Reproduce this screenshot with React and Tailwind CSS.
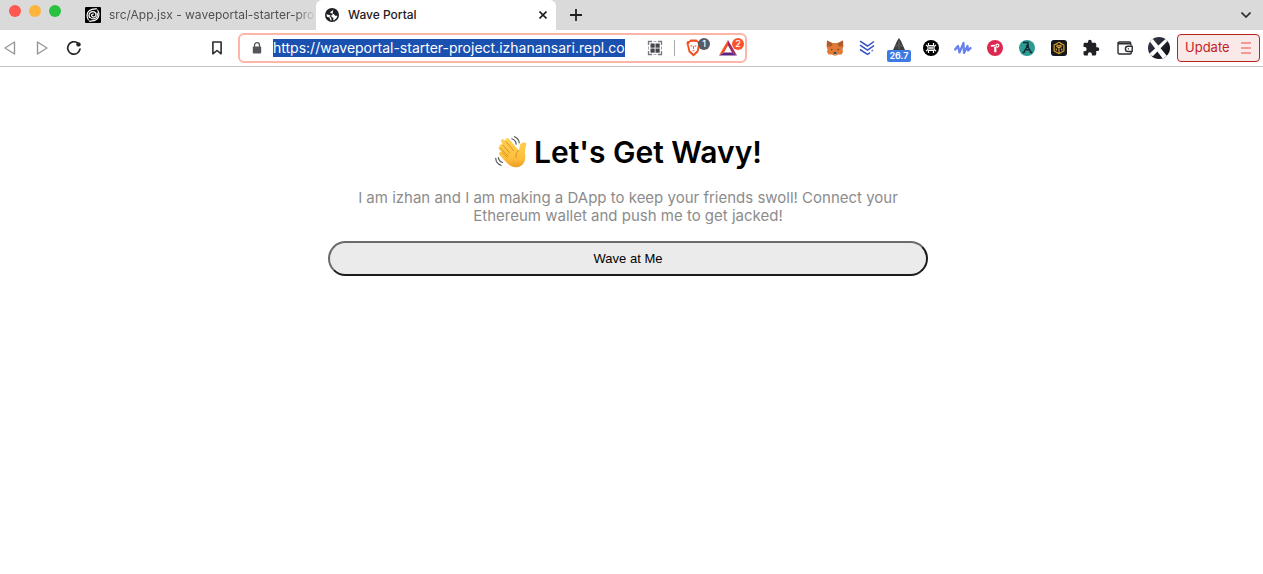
import React from "react";

function SwirlIcon() {
  return (
    <svg width="16" height="16" viewBox="0 0 16 16" fill="none" stroke="#fff" strokeLinecap="round" aria-hidden="true">
      <rect width="16" height="16" rx="1" fill="#000" stroke="none" />
      <path d="M3.300 12.800C1.200 9.500 1.800 5.500 4.500 3.500C7 1.800 9.500 2 11.500 1.800" strokeWidth="1.200" />
      <path d="M12.700 3.200C14.800 6.500 14.200 10.500 11.500 12.500C9 14.200 6.500 14 4.500 14.200" strokeWidth="1.200" />
      <path d="M4.500 10.500C3.400 8.200 4.200 5.600 6.400 4.800C8.800 4 11.300 5.500 11 8C10.700 10 8 10.800 6.900 9.200C6.200 8 7 6.900 8.200 7.200" strokeWidth="1.300" />
      <path d="M12.200 6C13 8.800 11.700 11.300 9.200 11.800C7.600 12.100 6.200 11.600 5.300 10.500" strokeWidth="1.100" />
    </svg>
  );
}

function GlobeIcon() {
  return (
    <svg width="14" height="14" viewBox="0 0 14 14" aria-hidden="true">
      <circle cx="7" cy="7" r="7" fill="#1f2023" />
      <path d="M8.200 1.600C7.800 3 6.800 3.100 5.900 3.500C5 4 5.200 4.900 6 5.300L8.700 5.900C9.700 6.300 9.400 7.500 10.500 7.700H12.400C12 10 10.400 12 8 12.400C8.300 11.300 8.800 10.500 8.200 9.800C7.700 9.100 6.500 9.200 6.300 8.200L5.200 7.300L1.600 6.200C1.500 7.200 1.700 8 2 8.700L4.300 9.500C5.200 10 4.700 11.200 5.800 12.500L6.500 12.600V11.300C6.500 10.300 5.700 9 4.500 8.300L5.200 7.300L7 7.400L7.500 6.600Z" fill="#fff" />
    </svg>
  );
}

function ReloadIcon() {
  return (
    <svg width="16" height="16" viewBox="0 0 16 16" fill="none" aria-hidden="true">
      <path d="M14 9.200A6.200 6.200 0 1 1 11.600 3" stroke="#242529" strokeWidth="1.700" strokeLinecap="round" />
      <circle cx="12.500" cy="4.400" r="2.200" fill="#242529" />
    </svg>
  );
}

function GridIcon() {
  return (
    <svg width="16" height="16" viewBox="0 0 16 16" aria-hidden="true">
      <path d="M1.500 5V1.500H5M11 1.500H14.500V5M14.500 11V14.500H11M5 14.500H1.500V11" fill="none" stroke="#77787e" strokeWidth="1.300" />
      <path d="M6.500 1.500H9.500M6.500 14.500H9.500M1.500 6.500V9.500M14.500 6.500V9.500" fill="none" stroke="#a5a6aa" strokeWidth="1" />
      <g fill="#45464c">
        <rect x="3.500" y="3.500" width="4.200" height="4.200" />
        <rect x="8.500" y="3.500" width="4.200" height="4.200" />
        <rect x="3.500" y="8.500" width="4.200" height="4.200" />
        <rect x="8.500" y="8.500" width="4.200" height="4.200" />
      </g>
    </svg>
  );
}

function BraveIcon() {
  return (
    <svg width="15" height="18" viewBox="0 0 15 18" aria-hidden="true">
      <path d="M4.500 0.500H10.500L12 2L13.800 2.200L14.600 4.200L14 6L12.400 13L7.500 17.500L2.600 13L1 6L0.400 4.200L1.200 2.200L3 2Z" fill="#f4511f" />
      <path d="M4 3L7.500 2.800L11 3L12.400 5.500L11.300 9L11 11.500L7.500 14.800L4 11.500L3.700 9L2.600 5.500Z" fill="#fff" />
      <path d="M4.400 6.200L6.400 6.600L6.200 7.700L4.800 7.200ZM10.600 6.200L8.600 6.600L8.800 7.700L10.200 7.200ZM7.100 7H7.900L8.100 9.500L7.500 10.100L6.900 9.500ZM5.800 11L7.500 11.600L9.200 11L7.500 12.400Z" fill="#f4511f" />
    </svg>
  );
}

function BatIcon() {
  return (
    <svg width="18" height="16" viewBox="0 0 18 16" aria-hidden="true">
      <path d="M9 0L0 15.500L5 12.500L9 5.500Z" fill="#f4511f" />
      <path d="M9 0L18 15.500L13 12.500L9 5.500Z" fill="#9e2a62" />
      <path d="M0 15.500H18L13 12.500H5Z" fill="#5e2482" />
    </svg>
  );
}

function FoxIcon() {
  return (
    <svg width="18" height="16" viewBox="0 0 18 16" aria-hidden="true">
      <path d="M1 0.500L6.500 3H11.500L17 0.500L17.500 6L16.500 9.500L17 12L15.500 14.500L12 14.500L10.500 15.500H7.500L6 14.500L2.500 14.500L1 12L1.500 9.500L0.500 6Z" fill="#e07a35" />
      <path d="M1 0.500L6.500 3.500L5.500 6.500L1.200 6.500ZM17 0.500L11.500 3.500L12.500 6.500L16.800 6.500Z" fill="#a85a30" />
      <path d="M4.800 8.800L7 9.800L5.500 10.300ZM13.200 8.800L11 9.800L12.500 10.300Z" fill="#33312f" />
      <path d="M6.800 12.800L7.500 14.800H10.500L11.200 12.800L10.500 12H7.500Z" fill="#bfa593" />
      <path d="M7.500 12.200H10.500L10.300 13.700H7.700Z" fill="#25272a" />
    </svg>
  );
}

function ChevronsIcon() {
  return (
    <svg width="16" height="16" viewBox="0 0 16 16" fill="none" stroke="#3451c7" strokeWidth="1.500" aria-hidden="true">
      <path d="M1 1.200L8.500 6L15 1.500M1 5.200L8.500 10.200L15 5.700M1 9.500L8.500 14.300L11 12.600" />
      <path d="M12.600 11L14 10.200" stroke="#5e78df" />
    </svg>
  );
}

function ArrowheadIcon() {
  return (
    <svg className="mb-2" width="12" height="12" viewBox="0 0 12 12" aria-hidden="true">
      <path d="M6 0L8 3L12 12H0L4 3Z" fill="#3b3d3e" />
      <path d="M6 3V11M2.500 9L5 6.500M9.500 9L7 6.500" stroke="#7d8081" strokeWidth="0.700" />
    </svg>
  );
}

function HexNodeIcon() {
  return (
    <svg width="16" height="16" viewBox="0 0 16 16" aria-hidden="true">
      <circle cx="8" cy="8" r="8" fill="#000" />
      <path d="M5.500 3V5.500H10.500V3M5.500 13V10.500H10.500V13M3 5L5 6.500V9.500L3 11M13 5L11 6.500V9.500L13 11M6 7.200H10M6 8.900H10" fill="none" stroke="#fff" strokeWidth="1.200" />
    </svg>
  );
}

function WaveformIcon() {
  return (
    <svg width="18" height="14" viewBox="0 0 18 14" fill="none" stroke="#6680f2" strokeWidth="2.200" strokeLinecap="round" strokeLinejoin="round" aria-hidden="true">
      <path d="M1.200 8.500L4 5L5.500 11.500L9.500 2L10 12L13.500 5L14.200 9.500L16.600 7" />
    </svg>
  );
}

function PinkCoinIcon() {
  return (
    <svg width="16" height="16" viewBox="0 0 16 16" aria-hidden="true">
      <circle cx="8" cy="8" r="8" fill="#dd2850" />
      <path d="M4.600 5.800L7.500 5.600" stroke="#fff" strokeWidth="1.800" strokeLinecap="round" />
      <path d="M8.300 7V12.200" stroke="#fff" strokeWidth="2.200" />
      <circle cx="10.400" cy="5.600" r="1.500" fill="none" stroke="#fff" strokeWidth="1.200" />
    </svg>
  );
}

function TealCoinIcon() {
  return (
    <svg width="16" height="16" viewBox="0 0 16 16" aria-hidden="true">
      <circle cx="8" cy="8" r="8" fill="#2c9b94" />
      <path d="M4 2.500H9V6M4.500 13L7.800 7H9L12.300 13M3.500 12.500L6 11.800M13.300 12.500L10.800 11.800M6.200 9.800H10.500" fill="none" stroke="#112a2c" strokeWidth="1.400" />
      <circle cx="8.500" cy="6" r="1.600" fill="#112a2c" />
    </svg>
  );
}

function CubeIcon() {
  return (
    <svg width="16" height="16" viewBox="0 0 16 16" fill="none" stroke="#e6a82d" strokeWidth="1.100" aria-hidden="true">
      <rect width="16" height="16" rx="3" fill="#16181c" stroke="none" />
      <path d="M8 2.300L12.900 5V11L8 13.700L3.100 11V5Z" />
      <path d="M5.300 6.300L8 7.800L10.700 6.300M8 7.800V13M5.500 4.800L8 6L10.500 4.800M5.300 8.500V10.500M10.700 8.500V10.500" />
    </svg>
  );
}

function PuzzleIcon() {
  return (
    <svg width="18" height="18" viewBox="0 0 24 24" fill="#202124" aria-hidden="true">
      <path d="M20.500 11H19V7c0-1.100-.9-2-2-2h-4V3.500a2.500 2.500 0 0 0-5 0V5H4c-1.100 0-2 .9-2 2v3.800h1.500a2.700 2.700 0 0 1 0 5.400H2V20c0 1.100.9 2 2 2h3.800v-1.500a2.700 2.700 0 0 1 5.400 0V22H17c1.100 0 2-.9 2-2v-4h1.500a2.500 2.500 0 0 0 0-5z" />
    </svg>
  );
}

function WalletIcon() {
  return (
    <svg width="16" height="14" viewBox="0 0 16 14" fill="none" stroke="#2b2c30" strokeWidth="1.400" strokeLinejoin="round" aria-hidden="true">
      <path d="M14 4.500V3.500C14 3 13.700 2.700 13 2.700H2.500C0.500 2.700 0.500 1 2.500 1H12.500C13.300 1 13.700 1.500 13.700 2.500M1 2V11.500C1 12.500 1.700 13 2.500 13H13C13.800 13 14.300 12.500 14.300 11.500V10.500" />
      <path d="M15.200 5.300H11A2.600 2.600 0 0 0 11 10.500H15.200Z" />
      <path d="M10.800 7.900H12" />
    </svg>
  );
}

function AvatarIcon() {
  return (
    <svg width="22" height="22" viewBox="0 0 22 22" aria-hidden="true">
      <defs>
        <clipPath id="avatar-clip"><circle cx="11" cy="11" r="11" /></clipPath>
        <linearGradient id="avatar-shade" x1="0" y1="0" x2="1" y2="1">
          <stop offset="0" stopColor="#3d4050" />
          <stop offset="1" stopColor="#07080c" />
        </linearGradient>
      </defs>
      <g clipPath="url(#avatar-clip)">
        <rect width="22" height="22" fill="url(#avatar-shade)" />
        <path d="M0 2L4 1L19 19L15 22Z" fill="#fff" />
        <path d="M18.500 1L20.500 3L5 19L0 18Z" fill="#fff" />
      </g>
    </svg>
  );
}

function WavingHand() {
  return (
    <svg width="34" height="34" viewBox="0 0 34 34" role="img" aria-label="Waving hand">
      <defs>
        <linearGradient id="hand-skin" x1="0" y1="0" x2="0" y2="1">
          <stop offset="0" stopColor="#ffd255" />
          <stop offset="0.700" stopColor="#fdbf3a" />
          <stop offset="1" stopColor="#ec9c25" />
        </linearGradient>
      </defs>
      <path d="M6 12.200C4.600 10.200 7 8.300 8.800 10L7.400 7.300C6 5 8.700 3.200 10.500 5L11.800 6.500C10.300 3.800 13.300 1.800 15.300 4.200L24.500 15.200C25.500 14.500 25.500 12.500 25.800 10.500C26.300 7.300 31.600 6.300 32.400 8.800C32 11.500 31 14 31 17.500C31.200 20.300 32 23 30.500 26.500C28.500 31.500 22 34 17 31C14 29.200 11.500 26.300 6 20.500C3.700 18.200 6 16 8 17.500L5.600 15C4 13 4.700 11.800 6 12.200Z" fill="url(#hand-skin)" />
      <path d="M8.800 10L15.500 17.800M11.800 6.500L19.500 15.500M6.300 13L14 21M8 17.500L13.200 22.300M24.300 15.500C22 17.500 21.300 20.500 22.300 23" fill="none" stroke="#d98b22" strokeWidth="0.900" strokeLinecap="round" />
      <path d="M17.800 3.800C20 4.500 22 6.800 22.200 9.200M20.400 1.700C23 2.700 25 5.400 25.200 7.800M4.300 22.500C4.700 25 6.500 26.800 8.600 27.500M1.700 23.300C2 26.800 4.200 29.500 7 30.300" fill="none" stroke="#55585c" strokeWidth="1.200" strokeLinecap="round" />
    </svg>
  );
}

function IconButton({ label, className, children }) {
  return (
    <button type="button" aria-label={label} className={`flex shrink-0 items-center justify-center ${className}`}>
      {children}
    </button>
  );
}

const extensions = [
  { name: "Fox wallet", Icon: FoxIcon },
  { name: "Portfolio", Icon: ChevronsIcon },
  { name: "Gas tracker", Icon: ArrowheadIcon, badge: "26.7" },
  { name: "Node wallet", Icon: HexNodeIcon },
  { name: "Waveform", Icon: WaveformIcon },
  { name: "Pink coin", Icon: PinkCoinIcon },
  { name: "Teal coin", Icon: TealCoinIcon },
  { name: "Cube wallet", Icon: CubeIcon },
  { name: "Extensions", Icon: PuzzleIcon },
];

function TabStrip() {
  return (
    <div className="flex h-[30px] items-stretch bg-[#dadada] text-xs">
      <div className="flex w-[77px] shrink-0 gap-2 pt-[5px] pl-[9px]">
        <button type="button" aria-label="Close window" className="size-3 rounded-full bg-[#fe5850]" />
        <button type="button" aria-label="Minimize window" className="size-3 rounded-full bg-[#feb43a]" />
        <button type="button" aria-label="Zoom window" className="size-3 rounded-full bg-[#2ac140]" />
      </div>
      <div className="flex w-[239px] items-center gap-2 pl-2 text-[#505154]">
        <span className="shrink-0"><SwirlIcon /></span>
        <a href="#editor" className="flex-1 mask-r-from-90% whitespace-nowrap">
          src/App.jsx - waveportal-starter-pro
        </a>
      </div>
      <div className="flex w-[240px] items-center rounded-t-md bg-white px-[9px] text-[#1f2023]">
        <GlobeIcon />
        <a href="#wave" className="ml-[9px] flex-1 font-medium">Wave Portal</a>
        <IconButton label="Close tab" className="size-2">
          <svg width="8" height="8" viewBox="0 0 8 8" stroke="#1f2023" strokeWidth="1.600" aria-hidden="true">
            <path d="M0.500 0.500L7.500 7.500M7.500 0.500L0.500 7.500" />
          </svg>
        </IconButton>
      </div>
      <IconButton label="New tab" className="w-10">
        <svg width="12" height="12" viewBox="0 0 12 12" stroke="#1f2023" strokeWidth="1.800" aria-hidden="true">
          <path d="M6 0V12M0 6H12" />
        </svg>
      </IconButton>
      <IconButton label="Search tabs" className="ml-auto w-[34px]">
        <svg width="10" height="6" viewBox="0 0 10 6" fill="none" stroke="#2b2c30" strokeWidth="1.700" aria-hidden="true">
          <path d="M0.500 0.500L5 5L9.500 0.500" />
        </svg>
      </IconButton>
    </div>
  );
}

function AddressBar() {
  return (
    <div className="flex h-[30px] flex-1 items-center rounded-md border-2 border-[#fdb5a7] bg-white">
      <svg className="ml-3 shrink-0" width="10" height="12" viewBox="0 0 10 12" aria-hidden="true">
        <path d="M2.500 5V3.200A2.400 2.400 0 0 1 7.500 3.200V5" fill="none" stroke="#55565c" strokeWidth="1.300" />
        <rect x="0.800" y="4.500" width="8.400" height="7" rx="1" fill="#55565c" />
      </svg>
      <input
        aria-label="Address"
        readOnly
        value="https://waveportal-starter-project.izhanansari.repl.co"
        className="ml-[11px] field-sizing-content h-[18px] bg-[#1a50b0] text-sm text-white outline-none"
      />
      <IconButton label="QR code" className="ml-auto size-4"><GridIcon /></IconButton>
      <span className="mx-[11px] h-4 w-px shrink-0 bg-[#a9a9ad]" />
      <IconButton label="Brave Shields" className="relative w-[15px]">
        <BraveIcon />
        <span className="absolute -top-px -right-[9px] flex size-3 items-center justify-center rounded-full bg-[#575b68] text-[9px] font-medium text-white">1</span>
      </IconButton>
      <IconButton label="Brave Rewards" className="relative mr-2 ml-[18px] w-[18px]">
        <BatIcon />
        <span className="absolute -top-0.5 -right-[7px] flex size-3 items-center justify-center rounded-full bg-[#fb542b] text-[9px] font-medium text-white">2</span>
      </IconButton>
    </div>
  );
}

function Toolbar() {
  return (
    <div className="flex h-[37px] items-center border-b border-[#c4c4c4] bg-white">
      <div className="flex w-[238px] shrink-0 items-center">
        <IconButton label="Back" className="w-5">
          <svg width="12" height="14" viewBox="0 0 12 14" fill="none" stroke="#97989b" strokeWidth="1.400" strokeLinejoin="round" aria-hidden="true">
            <path d="M10.500 1V13L1 7Z" />
          </svg>
        </IconButton>
        <IconButton label="Forward" className="ml-3 w-5">
          <svg width="12" height="14" viewBox="0 0 12 14" fill="none" stroke="#97989b" strokeWidth="1.400" strokeLinejoin="round" aria-hidden="true">
            <path d="M1.500 1V13L11 7Z" />
          </svg>
        </IconButton>
        <IconButton label="Reload" className="ml-3 w-5"><ReloadIcon /></IconButton>
        <IconButton label="Bookmark" className="mr-3 ml-auto w-[18px]">
          <svg width="10" height="14" viewBox="0 0 10 14" fill="none" stroke="#2b2c30" strokeWidth="1.600" strokeLinejoin="round" aria-hidden="true">
            <path d="M0.900 1H9.100V12.800L5 9.500L0.900 12.800Z" />
          </svg>
        </IconButton>
      </div>
      <AddressBar />
      <div className="ml-[72px] flex shrink-0 items-center">
        {extensions.map(({ name, Icon, badge }) => (
          <IconButton key={name} label={name} className="relative h-8 w-8">
            <Icon />
            {badge && (
              <span className="absolute top-[18px] left-1 flex h-3 w-6 items-center justify-center rounded-xs bg-[#3c7be6] text-[9px] font-semibold text-white">
                {badge}
              </span>
            )}
          </IconButton>
        ))}
        <IconButton label="Wallet" className="w-9"><WalletIcon /></IconButton>
        <IconButton label="Profile" className="w-8"><AvatarIcon /></IconButton>
        <button
          type="button"
          className="mr-[3px] ml-0.5 flex h-7 w-[83px] items-center justify-between rounded-sm border border-[#c01f1f] bg-[#fae9e9] px-[7px] text-[13px] text-[#c01f1f]"
        >
          Update
          <svg width="12" height="12" viewBox="0 0 12 12" stroke="#f59a94" strokeWidth="1.800" aria-hidden="true">
            <path d="M1 1H11M1 6H11M1 11H11" />
          </svg>
        </button>
      </div>
    </div>
  );
}

export default function App() {
  return (
    <div className="min-h-screen bg-white font-['Inter',sans-serif]">
      <header>
        <TabStrip />
        <Toolbar />
      </header>
      <main className="flex justify-center pt-16 pr-[7px]">
        <div className="flex w-full max-w-[600px] flex-col text-center">
          <h1 className="flex items-center justify-center gap-1.5 text-[30px] leading-[42px] font-semibold text-black">
            <WavingHand />
            Let's Get Wavy!
          </h1>
          <p className="mt-4 px-5 text-[15px] leading-[18px] text-[#8c8c8c]">
            I am izhan and I am making a DApp to keep your friends swoll! Connect your Ethereum wallet and push me to get jacked!
          </p>
          <button
            type="button"
            className="mt-4 h-[35px] rounded-full border-2 border-t-[#6b6b6b] border-r-[#1c1c1c] border-b-[#1c1c1c] border-l-[#6b6b6b] bg-[#ebebeb] font-['Liberation_Sans',sans-serif] text-[13px] text-black"
          >
            Wave at Me
          </button>
        </div>
      </main>
    </div>
  );
}
